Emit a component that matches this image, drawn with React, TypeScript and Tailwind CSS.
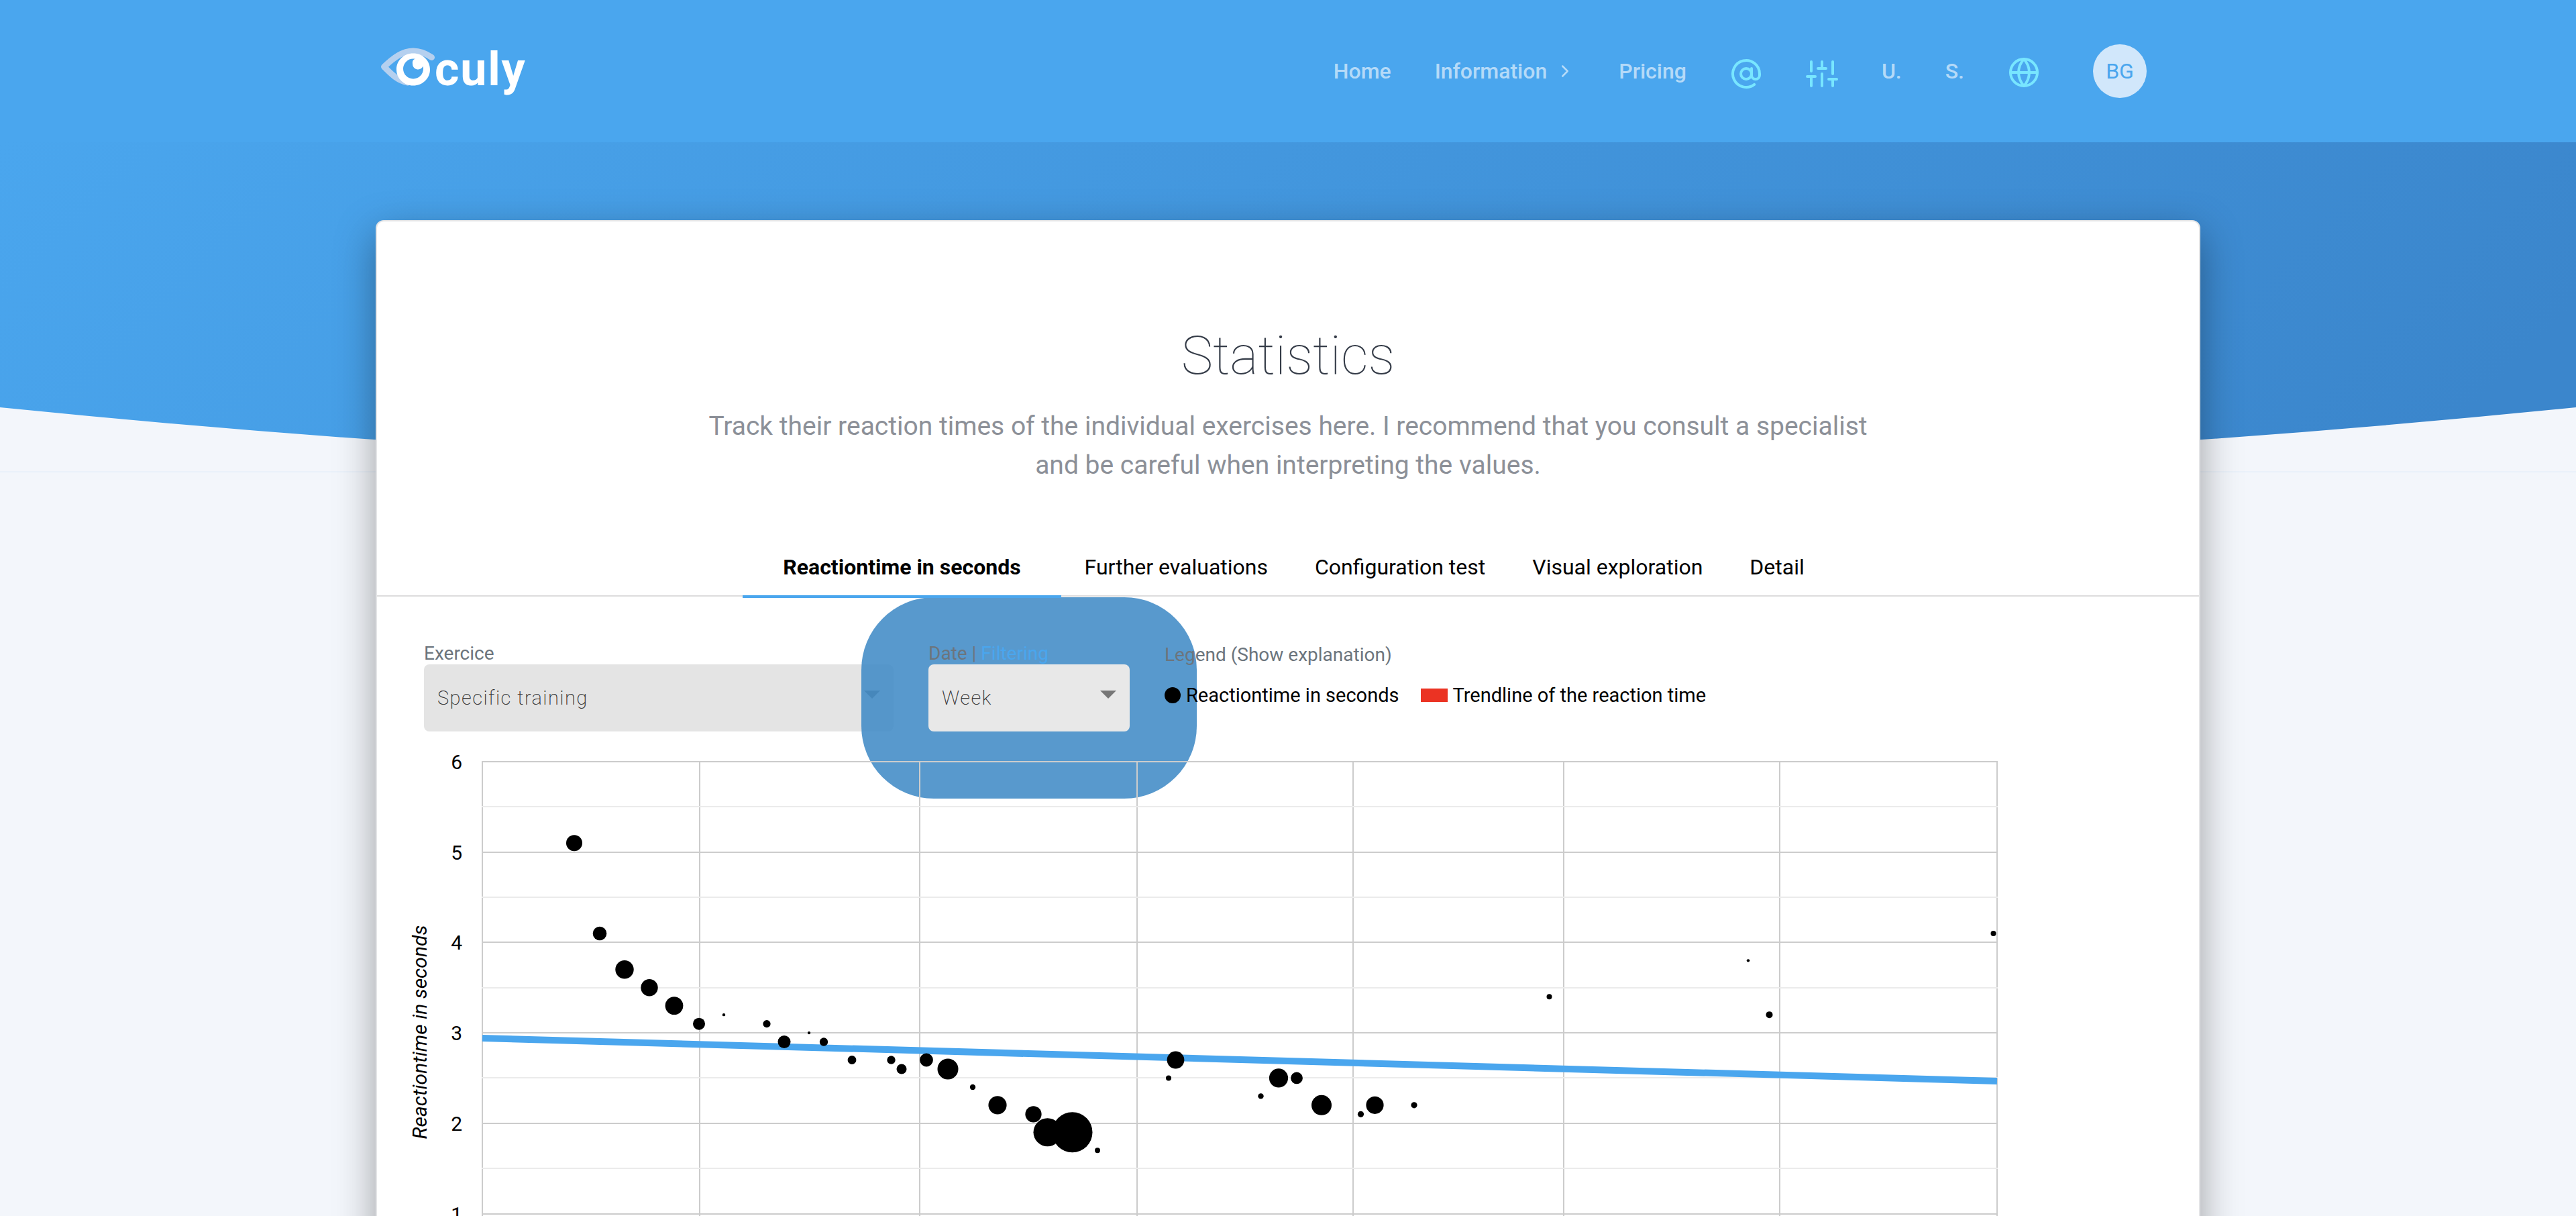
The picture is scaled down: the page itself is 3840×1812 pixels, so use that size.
import React, { useState } from 'react';
import { FiAtSign, FiChevronRight, FiGlobe, FiSliders } from 'react-icons/fi';

const tabs = [
  'Reactiontime in seconds',
  'Further evaluations',
  'Configuration test',
  'Visual exploration',
  'Detail',
];

// x position on the time axis, reaction time in seconds, bubble radius
const points: [number, number, number][] = [
  [294, 5.1, 12],
  [332, 4.1, 10.3],
  [369, 3.7, 13.7],
  [406, 3.5, 12.7],
  [443, 3.3, 13.4],
  [480, 3.1, 9],
  [517, 3.2, 2.2],
  [581, 3.1, 5.6],
  [607, 2.9, 9.5],
  [644, 3, 2.2],
  [666, 2.9, 6.2],
  [708, 2.7, 6.4],
  [766.5, 2.7, 6.2],
  [782, 2.6, 7.5],
  [819, 2.7, 9.9],
  [851, 2.6, 15.5],
  [888, 2.4, 4.2],
  [925, 2.2, 13.6],
  [978.5, 2.1, 12.1],
  [999.5, 1.9, 21],
  [1036.5, 1.9, 30],
  [1074, 1.7, 4],
  [1180, 2.5, 4],
  [1190.5, 2.7, 12.9],
  [1317.5, 2.3, 4.2],
  [1344, 2.5, 14.1],
  [1371, 2.5, 8.9],
  [1408, 2.2, 15],
  [1466.5, 2.1, 4.6],
  [1487.5, 2.2, 13.1],
  [1546, 2.2, 4.6],
  [1747.5, 3.4, 4],
  [2044, 3.8, 2.2],
  [2075.5, 3.2, 5],
  [2409.5, 4.1, 4],
];

const columns = [157, 481, 809, 1133, 1455, 1769, 2091, 2415];
const seconds = [6, 5, 4, 3, 2, 1];

const yFor = (value: number) => 25 + (6 - value) * 134.7;

const Logo: React.FC = () => (
  <a href="#home" aria-label="Oculy" className="flex items-center text-white">
    <svg viewBox="0 0 80 76" className="h-[76px] w-20" fill="none">
      <path
        d="M75.500 17.500 C66 11 58 8 48 8 C32 8 19 18 4.500 31.500 C14 41 24 52 40 55"
        stroke="#b5d0ef"
        strokeWidth="9"
        strokeLinecap="round"
        strokeLinejoin="round"
      />
      <path
        fillRule="evenodd"
        fill="currentColor"
        d="M48 11.500 C62 11.500 73 22 73 35.500 C73 49 62 59.500 48 59.500 C34 59.500 23 49 23 35.500 C23 22 34 11.500 48 11.500 Z M48 19.500 A15 15 0 1 0 63 34.500 A15 15 0 0 0 48 19.500 Z"
      />
      <path
        d="M51 19.500 C47 21 46.800 24 47 27 A8.200 8.200 0 0 0 62.500 31 L66 24 L56 16 Z"
        fill="currentColor"
      />
    </svg>
    <span className="pb-1.5 text-[70px] leading-[80px] font-bold tracking-wide">culy</span>
  </a>
);

const Navigation: React.FC = () => (
  <header className="bg-[#4aa6ee]">
    <div className="max-w-[2720px] mx-auto h-[212px] pl-2 pr-20 flex items-center justify-between">
      <Logo />
      <nav className="flex items-center gap-[65px] text-[32px] leading-[48px] font-medium text-white/60">
        <a href="#home">Home</a>
        <a href="#information" className="flex items-center gap-3">
          Information
          <FiChevronRight size={30} />
        </a>
        <a href="#pricing">Pricing</a>
        <a href="#contact" aria-label="Contact" className="pt-2 text-[#78e6ff]">
          <FiAtSign size={48} />
        </a>
        <a href="#settings" aria-label="Settings" className="pt-2 text-[#78e6ff]">
          <FiSliders size={48} />
        </a>
        <a href="#u">U.</a>
        <a href="#s">S.</a>
        <a href="#language" aria-label="Language" className="pt-1 text-[#78e6ff]">
          <FiGlobe size={48} />
        </a>
        <button className="ml-3.5 size-20 rounded-full bg-[#d1e7fb] text-[#4aa6ee] font-normal">BG</button>
      </nav>
    </div>
  </header>
);

const SelectArrow: React.FC = () => (
  <svg viewBox="0 0 24 12" className="absolute right-5 top-[39px] h-3 w-6 pointer-events-none">
    <path d="M0 0h24L12 12z" fill="#767676" />
  </svg>
);

const Chart: React.FC = () => (
  <svg viewBox="0 0 2716 860" className="relative block w-full" role="img" aria-label="Reactiontime in seconds">
    {columns.map((x) => (
      <line key={x} x1={x} x2={x} y1="25" y2="860" stroke="#cccccc" strokeWidth="2" shapeRendering="crispEdges" />
    ))}
    {[5.5, 4.5, 3.5, 2.5, 1.5, 0.5].map((v) => (
      <line key={v} x1="156" x2="2416" y1={yFor(v)} y2={yFor(v)} stroke="#ebebeb" strokeWidth="2" shapeRendering="crispEdges" />
    ))}
    {seconds.map((v) => (
      <g key={v}>
        <line x1="156" x2="2416" y1={yFor(v)} y2={yFor(v)} stroke="#cccccc" strokeWidth="2" shapeRendering="crispEdges" />
        <text x="127" y={yFor(v) + 11} textAnchor="end" fontSize="30">{v}</text>
      </g>
    ))}
    <line x1="157" y1="437" x2="2415" y2="501" stroke="#4aa6ee" strokeWidth="10" />
    {points.map(([x, v, r]) => (
      <circle key={`${x}-${v}`} cx={x} cy={yFor(v)} r={r} />
    ))}
    <text transform="translate(74 428) rotate(-90)" textAnchor="middle" fontSize="30" fontStyle="italic">
      Reactiontime in seconds
    </text>
  </svg>
);

export default function App() {
  const [activeTab, setActiveTab] = useState(tabs[0]);

  return (
    <div className="relative isolate h-screen overflow-hidden bg-[#f3f6fb] font-['Roboto',sans-serif]">
      <Navigation />

      {/* curved backdrop behind the card */}
      <svg
        viewBox="0 0 3840 492"
        preserveAspectRatio="none"
        className="absolute inset-x-0 top-[212px] -z-10 h-[492px] w-full"
      >
        <defs>
          <linearGradient id="hero" gradientUnits="userSpaceOnUse" x1="900" y1="-900" x2="2940" y2="1140">
            <stop offset="0" stopColor="#4aa6ee" />
            <stop offset="1" stopColor="#3b86cc" />
          </linearGradient>
        </defs>
        <path d="M0 0H3840V395Q1920 589 0 395Z" fill="url(#hero)" />
        <path d="M0 491H3840" stroke="#4aa6ee" strokeOpacity="0.1" />
      </svg>

      <main className="max-w-[2720px] mx-auto mt-[116px] bg-white border-2 border-[#e3e4e6] rounded-xl shadow-[0_20px_60px_rgba(0,0,0,0.36)]">
        <div className="pt-[152px] text-center">
          <h1 className="text-[80px] leading-[96px] font-thin text-[#353c48]">Statistics</h1>
          <p className="max-w-[1800px] mx-auto mt-7 text-[39px] leading-[58px] text-[#8c9098]">
            Track their reaction times of the individual exercises here. I recommend that you consult a specialist and be
            careful when interpreting the values.
          </p>
        </div>

        <div
          role="tablist"
          className="mt-[85px] pr-2 flex justify-center border-b-2 border-[#dddcdd] text-[32px] leading-[48px] text-black"
        >
          {tabs.map((tab) => (
            <button
              key={tab}
              role="tab"
              aria-selected={activeTab === tab}
              onClick={() => setActiveTab(tab)}
              className={`relative z-10 -mb-1 pt-[14px] pb-[18px] border-b-4 ${
                activeTab === tab ? 'px-[60px] font-bold border-[#4aa6ee]' : 'px-[35px] border-transparent'
              }`}
            >
              {tab}
            </button>
          ))}
        </div>

        <div className="mt-[69px] px-[70px] flex items-start gap-[52px] text-[28px] leading-[32px]">
          <div className="w-[700px]">
            <label htmlFor="exercise" className="relative z-10 block text-[#6c757d]">Exercice</label>
            <div className="relative">
              <select
                id="exercise"
                className="block w-full h-[100px] px-5 appearance-none rounded-lg bg-[#e4e4e4] text-[29px] font-extralight tracking-wider text-[#333333]"
              >
                <option>Specific training</option>
              </select>
              <SelectArrow />
            </div>
          </div>

          <div className="w-[300px]">
            <div className="relative z-10 text-[#6c757d]">
              <label htmlFor="range">Date</label> | <a href="#filtering" className="text-[#4aa6ee]">Filtering</a>
            </div>
            <div className="relative">
              {/* highlight ring around the date filter */}
              <span className="absolute -inset-[100px] rounded-[108px] bg-[rgba(63,138,198,0.87)] pointer-events-none" />
              <select
                id="range"
                className="relative block w-full h-[100px] px-5 appearance-none rounded-lg bg-[#e8e8e8] text-[29px] font-extralight tracking-wider text-[#333333]"
              >
                <option>Week</option>
                <option>Month</option>
              </select>
              <SelectArrow />
            </div>
          </div>

          <div className="relative z-10 pt-0.5 flex flex-col gap-7">
            <p className="text-[#6c757d]">Legend (Show explanation)</p>
            <ul className="flex gap-8 text-[29px] text-black">
              <li className="flex items-center gap-2">
                <span className="size-6 rounded-full bg-black" />
                Reactiontime in seconds
              </li>
              <li className="flex items-center gap-2">
                <span className="w-10 h-5 bg-[#eb3323]" />
                Trendline of the reaction time
              </li>
            </ul>
          </div>
        </div>

        <div className="mt-5">
          <Chart />
        </div>
      </main>
    </div>
  );
}
